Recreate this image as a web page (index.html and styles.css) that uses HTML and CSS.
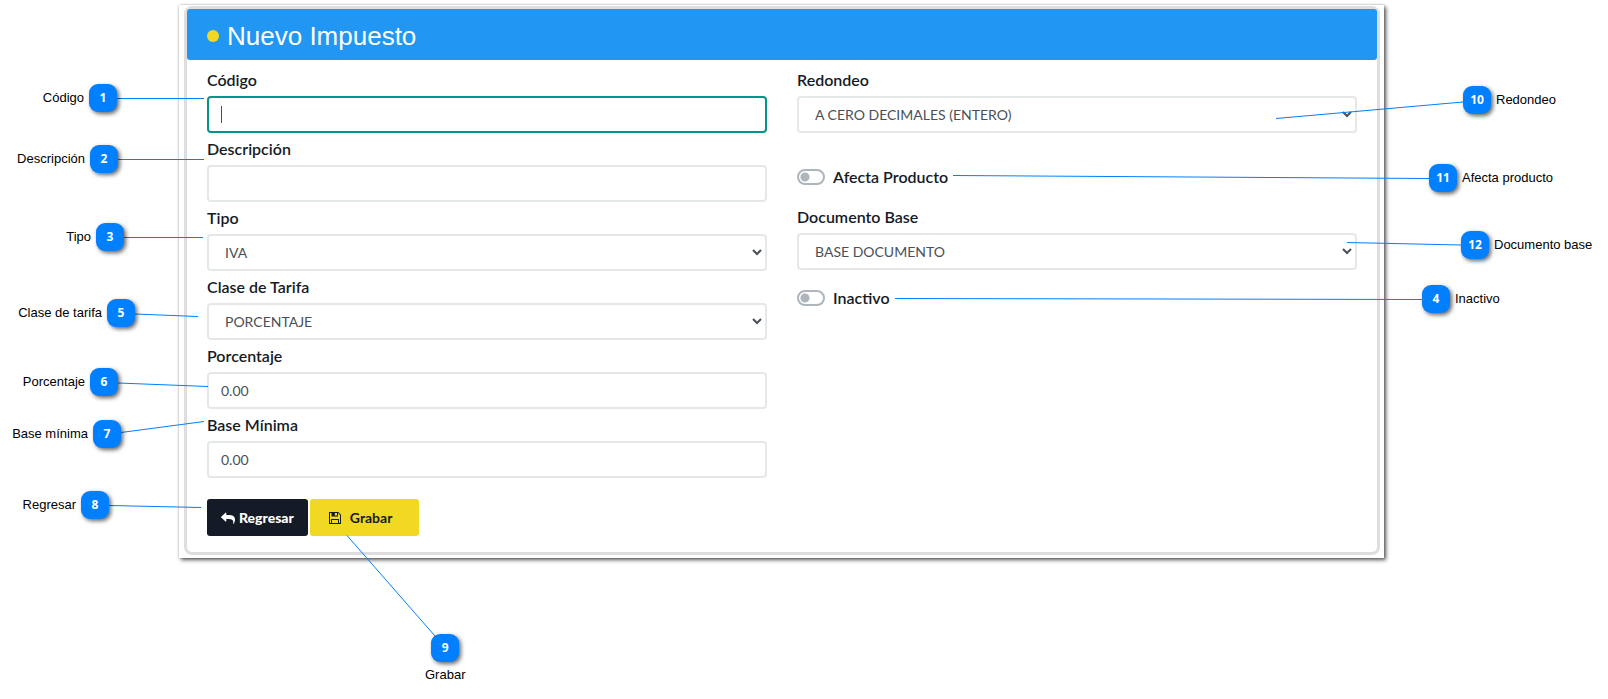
FILE: index.html
```html
<!DOCTYPE html>
<html lang="es">
<head>
<meta charset="utf-8">
<title>Nuevo Impuesto</title>
<link rel="stylesheet" href="styles.css">
</head>
<body>
<div class="stage">
  <main class="frame">
    <form class="card">
      <header class="card-header">
        <span class="dot"></span>
        <h1 class="title">Nuevo Impuesto</h1>
      </header>
      <div class="card-body">
        <div class="columns">
          <div class="column">
            <div class="field">
              <label class="label" for="codigo">Código</label>
              <div class="control-wrap">
                <input class="control control-active" id="codigo" type="text">
                <span class="caret"></span>
              </div>
            </div>
            <div class="field">
              <label class="label" for="descripcion">Descripción</label>
              <input class="control" id="descripcion" type="text">
            </div>
            <div class="field">
              <label class="label" for="tipo">Tipo</label>
              <select class="control" id="tipo"><option>IVA</option></select>
            </div>
            <div class="field">
              <label class="label" for="clase">Clase de Tarifa</label>
              <select class="control" id="clase"><option>PORCENTAJE</option></select>
            </div>
            <div class="field">
              <label class="label" for="porcentaje">Porcentaje</label>
              <input class="control" id="porcentaje" type="text" value="0.00">
            </div>
            <div class="field">
              <label class="label" for="base-minima">Base Mínima</label>
              <input class="control" id="base-minima" type="text" value="0.00">
            </div>
          </div>
          <div class="column">
            <div class="field">
              <label class="label" for="redondeo">Redondeo</label>
              <select class="control" id="redondeo"><option>A CERO DECIMALES (ENTERO)</option></select>
            </div>
            <div class="switch-row switch-row-spaced">
              <input class="switch" id="afecta" type="checkbox">
              <label class="label" for="afecta">Afecta Producto</label>
            </div>
            <div class="field">
              <label class="label" for="documento">Documento Base</label>
              <select class="control" id="documento"><option>BASE DOCUMENTO</option></select>
            </div>
            <div class="switch-row">
              <input class="switch" id="inactivo" type="checkbox">
              <label class="label" for="inactivo">Inactivo</label>
            </div>
          </div>
        </div>
        <div class="actions">
          <button class="button button-dark" type="button">
            <svg class="icon" viewBox="0 0 14 14" aria-hidden="true"><path d="M14 8.700c0 1.300-.6 2.900-1.200 4-.1.200-.2.300-.4.300s-.3-.2-.2-.4c.5-3.300-.9-4.600-4.700-4.600H5.300v2.100c0 .5-.5.700-.8.400L.2 6.500a.5.5 0 0 1 0-.8l4.300-4c.3-.3.8 0 .8.400V4h1.900C11.500 4 14 5.200 14 8.700z"/></svg>
            <span>Regresar</span>
          </button>
          <button class="button button-yellow" type="button">
            <svg class="icon" viewBox="0 0 14 14" aria-hidden="true"><path fill-rule="evenodd" d="M1 1h9.300L13 3.700V13H1zM2 2v10h1V8h8v4h1V4.100L10 2v3.500H3.500V2zM4 9v3h6V9zM6.800 2v2.500H9V2z"/></svg>
            <span>Grabar</span>
          </button>
        </div>
      </div>
    </form>
  </main>

  <svg class="leaders leaders-left" aria-hidden="true">
    <path d="M117 98.500H204M118 159.500H204M124 237.500H203M135 314L198 316.500M118 383L208 386.500M121 432.500L204 421.500M109 505.500L201 507.500M435 636L347 535.500"/>
  </svg>
  <svg class="leaders leaders-right" aria-hidden="true">
    <path d="M575 102L388 118.500M541 178.500L65 175.500M573 245L459 242.500M534 299.500L7 298.500"/>
  </svg>

  <div class="gutter gutter-left">
    <div class="callout pin-1"><span>Código</span><b class="badge">1</b></div>
    <div class="callout pin-2"><span>Descripción</span><b class="badge">2</b></div>
    <div class="callout pin-3"><span>Tipo</span><b class="badge">3</b></div>
    <div class="callout pin-5"><span>Clase de tarifa</span><b class="badge">5</b></div>
    <div class="callout pin-6"><span>Porcentaje</span><b class="badge">6</b></div>
    <div class="callout pin-7"><span>Base mínima</span><b class="badge">7</b></div>
    <div class="callout pin-8"><span>Regresar</span><b class="badge">8</b></div>
  </div>
  <div class="callout callout-below pin-9"><b class="badge">9</b><span>Grabar</span></div>
  <div class="gutter gutter-right">
    <div class="callout pin-10"><b class="badge">10</b><span>Redondeo</span></div>
    <div class="callout pin-11"><b class="badge">11</b><span>Afecta producto</span></div>
    <div class="callout pin-12"><b class="badge">12</b><span>Documento base</span></div>
    <div class="callout pin-4"><b class="badge">4</b><span>Inactivo</span></div>
  </div>
</div>
</body>
</html>
```
FILE: styles.css
```css
* {
  box-sizing: border-box;
}

body {
  margin: 0;
  background: #fff;
  color: #000;
  font-family: "Liberation Sans", Arial, sans-serif;
}

.stage {
  position: relative;
  min-height: 100vh;
  padding: 5px 224px 0 179px;
}

.frame {
  padding: 1px 4px 3px 5px;
  background: #fff;
  box-shadow: 0 0 2px rgba(0, 0, 0, 0.25), 2px 2px 4px rgba(0, 0, 0, 0.65);
}

.card {
  border: 3px solid #dedede;
  border-radius: 8px;
  font-family: Lato, sans-serif;
}

.card-header {
  display: flex;
  align-items: center;
  gap: 8px;
  height: 51px;
  padding: 2px 20px 0;
  border-radius: 3px;
  background: #2196f3;
}

.dot {
  width: 12px;
  height: 12px;
  border-radius: 50%;
  background: #f1d923;
}

.title {
  margin: 0;
  color: #fff;
  font: 400 26px/30px "Liberation Sans", Arial, sans-serif;
}

.card-body {
  padding: 8px 20px 16px;
}

.columns {
  display: grid;
  grid-template-columns: 1fr 1fr;
  gap: 30px;
}

.column {
  display: flex;
  flex-direction: column;
  gap: 4px;
}

.field {
  display: flex;
  flex-direction: column;
  gap: 4px;
}

.label {
  color: #151b26;
  font-size: 16px;
  font-weight: 600;
  line-height: 24px;
}

.control-wrap {
  position: relative;
}

.control {
  width: 100%;
  height: 37px;
  padding: 6px 12px;
  border: 2px solid #e4e8e7;
  border-radius: 4px;
  background-color: #fff;
  color: #495057;
  font: 400 14px/21px Lato, sans-serif;
  display: block;
}

.control-active {
  border-color: #009688;
}

.caret {
  position: absolute;
  left: 14px;
  top: 10px;
  width: 1px;
  height: 17px;
  background: #495057;
}

.switch-row {
  display: flex;
  align-items: center;
  gap: 8px;
  margin: 12px 0;
}

.switch-row-spaced {
  margin-top: 28px;
}

.switch {
  appearance: none;
  width: 28px;
  height: 16px;
  margin: 0;
  border: 2px solid #adb5bd;
  border-radius: 8px;
  background: radial-gradient(circle at 6px 6px, #adb5bd 4px, #fff 5px);
}

.actions {
  display: flex;
  gap: 2px;
  margin-top: 21px;
}

.button {
  display: flex;
  align-items: center;
  height: 37px;
  border: 0;
  border-radius: 3px;
  font: 700 14px/21px Lato, sans-serif;
}

.button-dark {
  gap: 4px;
  padding: 0 14px;
  background: #151b26;
  color: #fff;
  font-weight: 900;
}

.button-yellow {
  gap: 8px;
  padding: 0 27px 0 18px;
  background: #f1d923;
  color: #151b26;
}

.icon {
  width: 14px;
  height: 14px;
  fill: currentColor;
}

.leaders {
  position: absolute;
  top: 0;
  height: 699px;
  fill: none;
  stroke: #0080ff;
  stroke-width: 1;
  pointer-events: none;
}

.leaders-left {
  left: 0;
  width: 480px;
}

.leaders-right {
  right: 0;
  width: 720px;
}

.gutter {
  position: absolute;
  top: 0;
}

.gutter-left {
  left: 0;
  width: 135px;
}

.gutter-right {
  right: 0;
  width: 224px;
}

.callout {
  position: absolute;
  display: flex;
  align-items: center;
  gap: 5px;
  font-size: 13px;
  line-height: 16px;
  white-space: nowrap;
}

.callout-below {
  flex-direction: column;
}

.badge {
  display: flex;
  align-items: center;
  justify-content: center;
  width: 28px;
  height: 28px;
  border-radius: 9px;
  background: #0080ff;
  box-shadow: 2px 2px 4px rgba(0, 0, 0, 0.6);
  color: #fff;
  font-family: "Open Sans", sans-serif;
  font-size: 12px;
  font-weight: 700;
}

.pin-1 { right: 18px; top: 84px; }
.pin-2 { right: 17px; top: 145px; }
.pin-3 { right: 11px; top: 223px; }
.pin-5 { right: 0; top: 299px; }
.pin-6 { right: 17px; top: 368px; }
.pin-7 { right: 14px; top: 420px; }
.pin-8 { right: 26px; top: 491px; }
.pin-9 { left: 425px; top: 634px; }
.pin-10 { left: 79px; top: 86px; }
.pin-11 { left: 45px; top: 164px; }
.pin-12 { left: 77px; top: 231px; }
.pin-4 { left: 38px; top: 285px; }
```
